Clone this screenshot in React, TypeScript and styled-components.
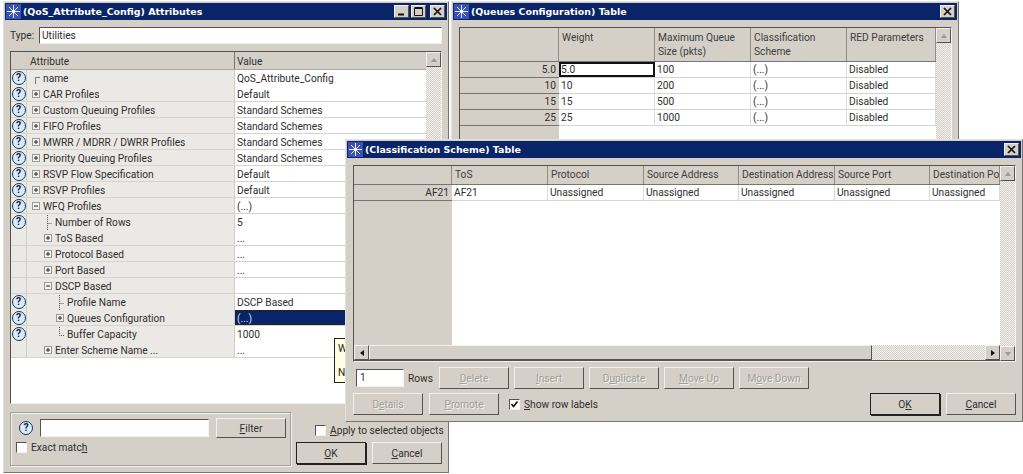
import React from "react";
import styled, { createGlobalStyle } from "styled-components";

const Global = createGlobalStyle`
    html, body { margin: 0; padding: 0; background: #fff; }
    body { font-family: Roboto, "Liberation Sans", Arial, sans-serif; font-size: 10.2px; color: #2e2e2e; }
`;

const Desktop = styled.div`
    position: relative;
    width: 1023px;
    height: 474px;
    overflow: hidden;
    background: #fff;
`;

const Win = styled.div<{ $x: number; $y: number; $w: number; $h: number }>`
    position: absolute;
    left: ${(p) => p.$x}px;
    top: ${(p) => p.$y}px;
    width: ${(p) => p.$w}px;
    height: ${(p) => p.$h}px;
    box-sizing: border-box;
    padding: 1px;
    background: #d4d0c8;
    border: 1px solid #e4e2dc;
    border-right-color: #77756f;
    border-bottom-color: #77756f;
    display: flex;
    flex-direction: column;
`;

const TitleBar = styled.div`
    height: 17px;
    flex: none;
    background: #0a246a;
    display: flex;
    align-items: center;
    padding: 0 2px 0 1px;
    gap: 2px;
    color: #fff;
    font-weight: bold;
    font-family: "DejaVu Sans", Verdana, sans-serif;
    font-size: 9.45px;
`;
const TitleText = styled.span`
    flex: 1;
    white-space: nowrap;
`;
const TitleBtn = styled.div<{ $gap?: number }>`
    width: 15px;
    height: 13px;
    margin-left: ${(p) => p.$gap ?? 0}px;
    box-sizing: border-box;
    background: #d4d0c8;
    border: 1px solid #f2f0ec;
    border-right-color: #55534e;
    border-bottom-color: #55534e;
    display: flex;
    align-items: center;
    justify-content: center;
`;

const Logo = () => (
    <svg width="15" height="15" viewBox="0 0 15 15">
        <rect width="15" height="15" fill="#3a52b4" />
        <path d="M7.5 1V14M1 7.5H14M3 3L12 12M12 3L3 12" stroke="#e8ecff" strokeWidth="1" />
        <circle cx="7.5" cy="7.5" r="1.6" fill="#fff" />
    </svg>
);
const CloseGlyph = () => (
    <svg width="9" height="9" viewBox="0 0 9 9">
        <path d="M1 1L8 8M8 1L1 8" stroke="#111" strokeWidth="1.7" />
    </svg>
);
const MinGlyph = () => (
    <svg width="9" height="9" viewBox="0 0 9 9">
        <rect x="1" y="6.5" width="6" height="2" fill="#111" />
    </svg>
);
const MaxGlyph = () => (
    <svg width="9" height="9" viewBox="0 0 9 9">
        <path d="M0.5 1.5H8.5V8.5H0.5Z" fill="none" stroke="#111" />
        <path d="M0.5 1H8.5" stroke="#111" strokeWidth="2" />
    </svg>
);

const Title = ({ text, full }: { text: string; full?: boolean }) => (
    <TitleBar>
        <Logo />
        <TitleText>{text}</TitleText>
        {full && (
            <>
                <TitleBtn><MinGlyph /></TitleBtn>
                <TitleBtn><MaxGlyph /></TitleBtn>
            </>
        )}
        <TitleBtn $gap={full ? 2 : 0}><CloseGlyph /></TitleBtn>
    </TitleBar>
);

const Sunken = styled.div`
    box-sizing: border-box;
    border: 1px solid #f4f2ee;
    border-top-color: #55534e;
    border-left-color: #55534e;
`;

const TypeRow = styled.div`
    display: flex;
    align-items: center;
    height: 16px;
    margin: 7px 5px 0 5px;
`;
const TypeLabel = styled.span`
    width: 29px;
    flex: none;
`;
const TypeField = styled(Sunken)`
    flex: 1;
    height: 17px;
    background: #fff;
    padding: 1px 2px;
    line-height: 13px;
`;

const AttrFrame = styled(Sunken)`
    display: flex;
    margin: 8px 5px 0 5px;
    height: 353px;
    background: #fff;
`;
const AttrBody = styled.div`
    flex: 1;
    min-width: 0;
`;
const AttrGrid = styled.div<{ $header?: boolean }>`
    display: grid;
    grid-template-columns: 16px 208px 1fr;
    height: ${(p) => (p.$header ? 18 : 16)}px;
    box-sizing: border-box;
    background: ${(p) => (p.$header ? "#d4d0c8" : "transparent")};
    border-bottom: 1px solid ${(p) => (p.$header ? "#a8a69f" : "#d6d4cf")};
`;
const IconCell = styled.div<{ $header?: boolean }>`
    background: ${(p) => (p.$header ? "#d4d0c8" : "#ebe9e5")};
    border-right: 1px solid #cfcdc7;
    display: flex;
    align-items: center;
    justify-content: center;
`;
const NameCell = styled.div<{ $level: number; $header?: boolean }>`
    background: ${(p) => (p.$header ? "#d4d0c8" : "#ebe9e5")};
    border-right: 1px solid ${(p) => (p.$header ? "#77756f" : "#cfcdc7")};
    display: flex;
    align-items: center;
    gap: 3px;
    padding-left: ${(p) => (p.$header ? 3 : 5 + p.$level * 12)}px;
    padding-top: 1px;
    white-space: nowrap;
`;
const ValueCell = styled.div<{ $selected?: boolean; $header?: boolean }>`
    padding-left: 2px;
    padding-top: 1px;
    display: flex;
    align-items: center;
    white-space: nowrap;
    background: ${(p) => (p.$selected ? "#0a246a" : p.$header ? "#d4d0c8" : "#fff")};
    color: ${(p) => (p.$selected ? "#d8dcec" : "inherit")};
    outline: ${(p) => (p.$selected ? "1px solid #222" : "none")};
    outline-offset: -1px;
`;

const HelpDot = styled.span`
    width: 14px;
    height: 14px;
    box-sizing: border-box;
    border-radius: 50%;
    border: 1px solid #14365f;
    background: #dcebf5;
    color: #14264a;
    font-size: 10.5px;
    font-weight: bold;
    line-height: 12px;
    text-align: center;
    flex: none;
`;

const TreeBox = ({ open }: { open?: boolean }) => (
    <svg width="8" height="8" viewBox="0 0 8 8" style={{ flex: "none" }}>
        <rect x="0.5" y="0.5" width="7" height="7" fill="#f4f3f0" stroke="#9a9a9a" />
        <path d={open ? "M2 4H6" : "M2 4H6M4 2V6"} stroke="#222" />
    </svg>
);
const TreeLine = ({ kind }: { kind: string }) => (
    <svg width="8" height="15" viewBox="0 0 8 15" style={{ flex: "none" }}>
        {kind === "name" ? (
            <path d="M3.5 13V6.5H8" fill="none" stroke="#777" />
        ) : (
            <path
                d={kind === "last" ? "M3.5 0V8.5H8" : "M3.5 0V15M3.5 8.5H8"}
                fill="none"
                stroke="#555"
                strokeDasharray="1 1"
            />
        )}
    </svg>
);

const ScrollBar = styled.div<{ $w?: number }>`
    width: ${(p) => p.$w ?? 15}px;
    flex: none;
    display: flex;
    flex-direction: column;
    justify-content: space-between;
    background-color: #ebe9e5;
    background-image: repeating-conic-gradient(#d4d0c8 0 25%, #f2f1ee 0 50%);
    background-size: 2px 2px;
`;
const ArrowBtn = styled.div`
    width: 15px;
    height: 15px;
    flex: none;
    box-sizing: border-box;
    background: #d4d0c8;
    border: 1px solid #f2f0ec;
    border-right-color: #55534e;
    border-bottom-color: #55534e;
    display: flex;
    align-items: center;
    justify-content: center;
`;
const Arrow = ({ dir, dim }: { dir: "up" | "down" | "left" | "right"; dim?: boolean }) => {
    const d = {
        up: "M4 2L7 6H1Z",
        down: "M1 2H7L4 6Z",
        left: "M6 1V7L2 4Z",
        right: "M2 1V7L6 4Z",
    }[dir];
    return (
        <svg width="8" height="8" viewBox="0 0 8 8">
            <path d={d} fill={dim ? "#9b9992" : "#111"} />
        </svg>
    );
};

const Tooltip = styled.div`
    position: absolute;
    left: 334px;
    top: 338px;
    width: 30px;
    height: 45px;
    box-sizing: border-box;
    background: #ffffe1;
    border: 1px solid #222;
    padding: 4px 3px;
    display: flex;
    flex-direction: column;
    justify-content: space-between;
    color: #222;
`;

const BottomArea = styled.div`
    display: flex;
    margin: 8px 5px 0 5px;
    gap: 5px;
`;
const GroupBox = styled.div`
    width: 281px;
    height: 54px;
    flex: none;
    box-sizing: border-box;
    border: 1px solid #a4a29b;
    box-shadow: inset 1px 1px 0 #f2f0ec, 1px 1px 0 #f2f0ec;
    padding: 5px 4px 0 5px;
    display: flex;
    flex-direction: column;
    gap: 4px;
`;
const FilterRow = styled.div`
    display: flex;
    align-items: center;
    gap: 7px;
    padding-left: 3px;
`;
const FilterField = styled(Sunken)`
    width: 170px;
    height: 18px;
    background: #fff;
`;
const CheckRow = styled.label<{ $shift?: number }>`
    display: flex;
    align-items: center;
    gap: 4px;
    white-space: nowrap;
    margin-left: ${(p) => p.$shift ?? 0}px;
`;
const CheckBox = styled(Sunken)`
    width: 11px;
    height: 11px;
    background: #fff;
    display: flex;
    align-items: center;
    justify-content: center;
    flex: none;
`;
const Side = styled.div`
    flex: 1;
    display: flex;
    flex-direction: column;
    gap: 6px;
    padding-top: 13px;
`;
const BtnRow = styled.div<{ $gap?: number }>`
    display: flex;
    gap: ${(p) => p.$gap ?? 6}px;
    align-items: center;
`;
const Btn = styled.div<{ $def?: boolean; $off?: boolean; $w?: number; $h?: number }>`
    width: ${(p) => p.$w ?? 70}px;
    height: ${(p) => p.$h ?? 22}px;
    flex: none;
    box-sizing: border-box;
    background: #d4d0c8;
    border: 1px solid #f2f0ec;
    border-right-color: #55534e;
    border-bottom-color: #55534e;
    outline: ${(p) => (p.$def ? "1px solid #222" : "none")};
    outline-offset: -1px;
    box-shadow: ${(p) => (p.$def ? "1px 1px 0 #222" : "none")};
    display: flex;
    align-items: center;
    justify-content: center;
    color: ${(p) => (p.$off ? "#a09e97" : "inherit")};
    text-shadow: ${(p) => (p.$off ? "1px 1px 0 #f2f0ec" : "none")};
`;

const DataGrid = styled(Sunken)`
    background: #fff;
    display: flex;
`;
const DataBody = styled.div`
    flex: 1;
    min-width: 0;
    display: flex;
    flex-direction: column;
`;
const DataHead = styled.div<{ $cols: string; $h: number }>`
    display: grid;
    grid-template-columns: ${(p) => p.$cols};
    height: ${(p) => p.$h}px;
    flex: none;
    background: #d4d0c8;
    border-bottom: 1px solid #77756f;
    box-sizing: border-box;
`;
const HeadCell = styled.div<{ $top?: number }>`
    padding: ${(p) => p.$top ?? 2}px 3px 0;
    border-right: 1px solid #8f8d86;
    line-height: 14px;
    overflow: hidden;
    white-space: pre;
    color: #3c3c3c;
`;
const DataTable = styled.div`
    flex: 1;
    min-height: 0;
    background: #fff;
    display: flex;
    flex-direction: column;
`;
const DataRow = styled.div<{ $cols: string }>`
    display: grid;
    grid-template-columns: ${(p) => p.$cols};
    height: 16px;
    flex: none;
    box-sizing: border-box;
    border-bottom: 1px solid #d6d4cf;
`;
const LabelCell = styled.div`
    background: #d4d0c8;
    text-align: right;
    padding-right: 3px;
    line-height: 15px;
    border-bottom: 1px solid #77756f;
    margin-bottom: -1px;
`;
const Cell = styled.div<{ $focus?: boolean }>`
    padding-left: 2px;
    line-height: 15px;
    border-right: 1px solid #dddbd6;
    outline: ${(p) => (p.$focus ? "2px solid #111" : "none")};
    outline-offset: -2px;
    overflow: hidden;
    white-space: nowrap;
`;
const FillRow = styled.div<{ $label: number }>`
    flex: 1;
    background: linear-gradient(
        to right,
        #d4d0c8 ${(p) => p.$label}px,
        #fff ${(p) => p.$label}px
    );
`;
const HScroll = styled.div`
    height: 15px;
    flex: none;
    display: flex;
    background-color: #ebe9e5;
    background-image: repeating-conic-gradient(#d4d0c8 0 25%, #f2f1ee 0 50%);
    background-size: 2px 2px;
    border-bottom: 1px solid #55534e;
    box-sizing: content-box;
`;
const HThumb = styled.div`
    width: 503px;
    box-sizing: border-box;
    background: #d4d0c8;
    border: 1px solid #f2f0ec;
    border-right-color: #55534e;
    border-bottom-color: #55534e;
`;
const HSpacer = styled.div`
    flex: 1;
`;
const Controls = styled.div`
    display: flex;
    flex-direction: column;
    gap: 4px;
    padding: 5px 5px 0 6px;
`;
const RowsField = styled(Sunken)`
    width: 48px;
    height: 18px;
    margin-left: 3px;
    background: #fff;
    padding-left: 3px;
    line-height: 16px;
`;
const RowsLabel = styled.span`
    width: 27px;
    flex: none;
`;
const Spacer = styled.div`
    flex: 1;
`;

const Q1 = styled(DataGrid)`
    margin: 7px 5px 0 6px;
    flex: 1;
`;
const Q3 = styled(DataGrid)`
    margin: 7px 5px 0 6px;
    height: 197px;
`;
const RowsLine = styled(BtnRow)`
    gap: 4px;
`;

const attrRows: { name: string; value: string; level: number; help: boolean; box?: "open" | "closed"; line?: string; selected?: boolean }[] = [
    { name: "name", value: "QoS_Attribute_Config", level: 0, help: true, line: "name" },
    { name: "CAR Profiles", value: "Default", level: 0, help: true, box: "closed" },
    { name: "Custom Queuing Profiles", value: "Standard Schemes", level: 0, help: true, box: "closed" },
    { name: "FIFO Profiles", value: "Standard Schemes", level: 0, help: true, box: "closed" },
    { name: "MWRR / MDRR / DWRR Profiles", value: "Standard Schemes", level: 0, help: true, box: "closed" },
    { name: "Priority Queuing Profiles", value: "Standard Schemes", level: 0, help: true, box: "closed" },
    { name: "RSVP Flow Specification", value: "Default", level: 0, help: true, box: "closed" },
    { name: "RSVP Profiles", value: "Default", level: 0, help: true, box: "closed" },
    { name: "WFQ Profiles", value: "(...)", level: 0, help: true, box: "open" },
    { name: "Number of Rows", value: "5", level: 1, help: true, line: "mid" },
    { name: "ToS Based", value: "...", level: 1, help: false, box: "closed" },
    { name: "Protocol Based", value: "...", level: 1, help: false, box: "closed" },
    { name: "Port Based", value: "...", level: 1, help: false, box: "closed" },
    { name: "DSCP Based", value: "", level: 1, help: false, box: "open" },
    { name: "Profile Name", value: "DSCP Based", level: 2, help: true, line: "mid" },
    { name: "Queues Configuration", value: "(...)", level: 2, help: true, box: "closed", selected: true },
    { name: "Buffer Capacity", value: "1000", level: 2, help: true, line: "last" },
    { name: "Enter Scheme Name ...", value: "...", level: 1, help: false, box: "closed" },
];

const queueCols = "99px 96px 96px 96px 1fr";
const queueRows = [
    ["5.0", "5.0", "100"],
    ["10", "10", "200"],
    ["15", "15", "500"],
    ["25", "25", "1000"],
];
const classCols = "98px 96px 96px 95px 96px 95px 1fr";

export default function App() {
    return (
        <Desktop>
            <Global />

            <Win $x={3} $y={1} $w={446} $h={472}>
                <Title text="(QoS_Attribute_Config) Attributes" full />
                <TypeRow>
                    <TypeLabel>Type:</TypeLabel>
                    <TypeField>Utilities</TypeField>
                </TypeRow>
                <AttrFrame>
                    <AttrBody>
                        <AttrGrid $header>
                            <IconCell $header />
                            <NameCell $level={0} $header>Attribute</NameCell>
                            <ValueCell $header>Value</ValueCell>
                        </AttrGrid>
                        {attrRows.map((row) => (
                            <AttrGrid key={row.name}>
                                <IconCell>{row.help && <HelpDot>?</HelpDot>}</IconCell>
                                <NameCell $level={row.level}>
                                    {row.box && <TreeBox open={row.box === "open"} />}
                                    {row.line && <TreeLine kind={row.line} />}
                                    {row.name}
                                </NameCell>
                                <ValueCell $selected={row.selected}>{row.value}</ValueCell>
                            </AttrGrid>
                        ))}
                    </AttrBody>
                    <ScrollBar>
                        <ArrowBtn><Arrow dir="up" dim /></ArrowBtn>
                    </ScrollBar>
                </AttrFrame>
                <BottomArea>
                    <GroupBox>
                        <FilterRow>
                            <HelpDot>?</HelpDot>
                            <FilterField />
                            <Btn $h={20}><span><u>F</u>ilter</span></Btn>
                        </FilterRow>
                        <CheckRow>
                            <CheckBox />
                            <span>Exact matc<u>h</u></span>
                        </CheckRow>
                    </GroupBox>
                    <Side>
                        <CheckRow $shift={19}>
                            <CheckBox />
                            <span><u>A</u>pply to selected objects</span>
                        </CheckRow>
                        <BtnRow>
                            <Btn $def><u>O</u>K</Btn>
                            <Btn><span><u>C</u>ancel</span></Btn>
                        </BtnRow>
                    </Side>
                </BottomArea>
            </Win>

            <Tooltip>
                <span>W</span>
                <span>N</span>
            </Tooltip>

            <Win $x={451} $y={1} $w={508} $h={145}>
                <Title text="(Queues Configuration) Table" />
                <Q1>
                    <DataBody>
                        <DataHead $cols={queueCols} $h={34}>
                            <HeadCell />
                            <HeadCell $top={3}>Weight</HeadCell>
                            <HeadCell $top={3}>{"Maximum Queue\nSize (pkts)"}</HeadCell>
                            <HeadCell $top={3}>{"Classification\nScheme"}</HeadCell>
                            <HeadCell $top={3}>RED Parameters</HeadCell>
                        </DataHead>
                        <DataTable>
                            {queueRows.map((r, i) => (
                                <DataRow key={r[0]} $cols={queueCols}>
                                    <LabelCell>{r[0]}</LabelCell>
                                    <Cell $focus={i === 0}>{r[1]}</Cell>
                                    <Cell>{r[2]}</Cell>
                                    <Cell>(...)</Cell>
                                    <Cell>Disabled</Cell>
                                </DataRow>
                            ))}
                            <FillRow $label={99} />
                        </DataTable>
                    </DataBody>
                    <ScrollBar>
                        <ArrowBtn><Arrow dir="up" dim /></ArrowBtn>
                    </ScrollBar>
                </Q1>
            </Win>

            <Win $x={345} $y={139} $w={678} $h={283}>
                <Title text="(Classification Scheme) Table" />
                <Q3>
                    <DataBody>
                        <DataHead $cols={classCols} $h={19}>
                            <HeadCell />
                            <HeadCell>ToS</HeadCell>
                            <HeadCell>Protocol</HeadCell>
                            <HeadCell>Source Address</HeadCell>
                            <HeadCell>Destination Address</HeadCell>
                            <HeadCell>Source Port</HeadCell>
                            <HeadCell>Destination Po</HeadCell>
                        </DataHead>
                        <DataTable>
                            <DataRow $cols={classCols}>
                                <LabelCell>AF21</LabelCell>
                                <Cell>AF21</Cell>
                                <Cell>Unassigned</Cell>
                                <Cell>Unassigned</Cell>
                                <Cell>Unassigned</Cell>
                                <Cell>Unassigned</Cell>
                                <Cell>Unassigned</Cell>
                            </DataRow>
                            <FillRow $label={98} />
                        </DataTable>
                        <HScroll>
                            <ArrowBtn><Arrow dir="left" /></ArrowBtn>
                            <HThumb />
                            <HSpacer />
                            <ArrowBtn><Arrow dir="right" /></ArrowBtn>
                        </HScroll>
                    </DataBody>
                    <ScrollBar>
                        <ArrowBtn><Arrow dir="up" dim /></ArrowBtn>
                        <ArrowBtn><Arrow dir="down" dim /></ArrowBtn>
                    </ScrollBar>
                </Q3>
                <Controls>
                    <RowsLine>
                        <RowsField>1</RowsField>
                        <RowsLabel>Rows</RowsLabel>
                        <BtnRow $gap={5}>
                            <Btn $off><span><u>D</u>elete</span></Btn>
                            <Btn $off><span><u>I</u>nsert</span></Btn>
                            <Btn $off><span>D<u>u</u>plicate</span></Btn>
                            <Btn $off><span><u>M</u>ove Up</span></Btn>
                            <Btn $off><span>M<u>o</u>ve Down</span></Btn>
                        </BtnRow>
                    </RowsLine>
                    <BtnRow>
                        <Btn $off><span>D<u>e</u>tails</span></Btn>
                        <Btn $off><span><u>P</u>romote</span></Btn>
                        <CheckRow $shift={4}>
                            <CheckBox>
                                <svg width="9" height="9" viewBox="0 0 9 9">
                                    <path d="M1.5 4L3.5 6.5L7.5 1.5" fill="none" stroke="#111" strokeWidth="1.6" />
                                </svg>
                            </CheckBox>
                            <span><u>S</u>how row labels</span>
                        </CheckRow>
                        <Spacer />
                        <Btn $def>O<u>K</u></Btn>
                        <Btn><span><u>C</u>ancel</span></Btn>
                    </BtnRow>
                </Controls>
            </Win>
        </Desktop>
    );
}
